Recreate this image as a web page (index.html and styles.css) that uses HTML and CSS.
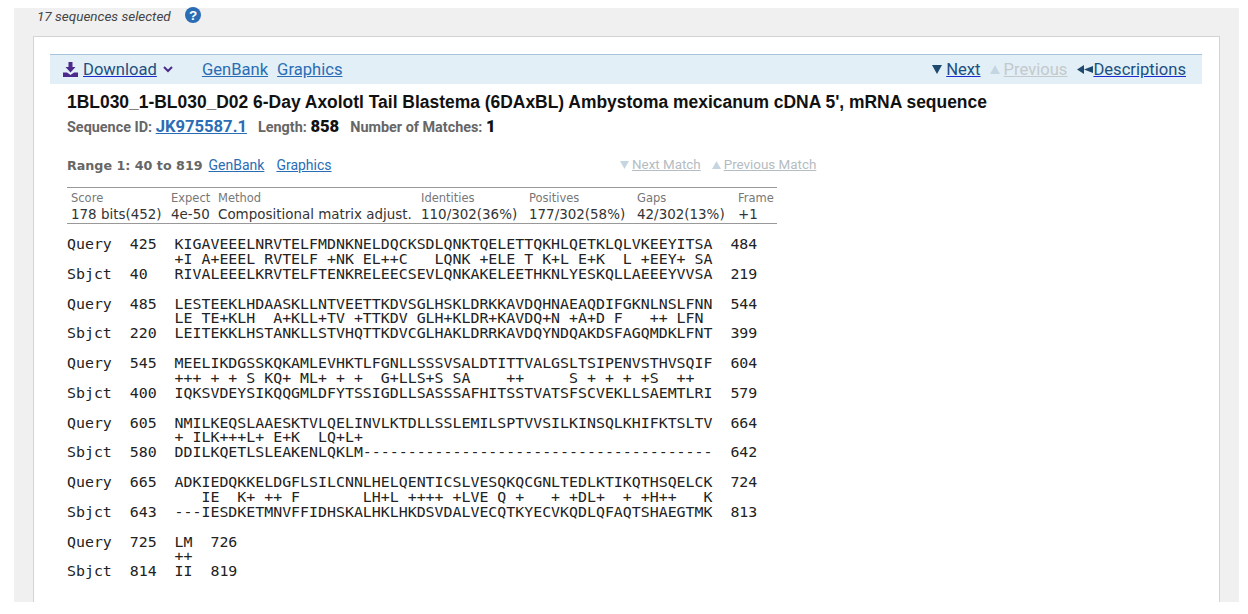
FILE: index.html
```html
<!DOCTYPE html>

<html>
<head>
    <meta charset="utf-8">
    <title>Alignments</title>
    <link rel="stylesheet" href="styles.css">
</head>

<body>
<div id="results">
    <div id="selected">
        <em>17 sequences selected</em>
        <svg class="help" width="16" height="16" viewBox="0 0 16 16"><circle cx="8" cy="8" r="8" fill="#2a6db5"/><text x="8" y="12.800" text-anchor="middle" class="help-mark">?</text></svg>
    </div>
    <div id="card">
        <div id="toolbar">
            <div class="tools">
                <svg class="dl" width="15" height="15" viewBox="0 0 15 15"><path d="M5.500 0h4v5h3L7.500 10.500 2.500 5h3z" fill="#4b2a8c"/><path d="M0 10.500h4l3.500 2.500 3.500-2.500h4V15H0z" fill="#4b2a8c"/></svg>
                <a href="#" class="dark">Download</a>
                <svg class="chev" width="10" height="7" viewBox="0 0 10 7"><path d="M1 1l4 4 4-4" fill="none" stroke="#4b2a8c" stroke-width="2"/></svg>
                <a href="#" class="first">GenBank</a>
                <a href="#">Graphics</a>
            </div>
            <div class="tools">
                <svg class="tri" width="10" height="9" viewBox="0 0 10 9"><path d="M0 0h10L5 9z" fill="#1d4a6e"/></svg><a href="#" class="dark">Next</a>
                <svg class="tri tri-off" width="10" height="9" viewBox="0 0 10 9"><path d="M0 9h10L5 0z" fill="#c5d6e2"/></svg><a href="#" class="off">Previous</a>
                <svg class="back" width="16" height="9" viewBox="0 0 16 9"><path d="M0 4.500L7 0v9zM7 4.500L16 1v7z" fill="#1d4a6e"/></svg><a href="#" class="dark">Descriptions</a>
            </div>
        </div>
        <h1>1BL030_1-BL030_D02 6-Day Axolotl Tail Blastema (6DAxBL) Ambystoma mexicanum cDNA 5', mRNA sequence</h1>
        <div id="seqinfo">
            <span>Sequence ID: <a href="#">JK975587.1</a></span>
            <span>Length: <b>858</b></span>
            <span>Number of Matches: <b>1</b></span>
        </div>
        <div id="range">
            <div class="range-left">
                <b>Range 1: 40 to 819</b>
                <a href="#">GenBank</a>
                <a href="#">Graphics</a>
            </div>
            <div class="range-right">
                <svg width="9" height="8" viewBox="0 0 9 8"><path d="M0 0h9L4.500 8z" fill="#c5d6e2"/></svg>
                <a href="#">Next Match</a>
                <svg class="gap" width="9" height="8" viewBox="0 0 9 8"><path d="M0 8h9L4.500 0z" fill="#c5d6e2"/></svg>
                <a href="#">Previous Match</a>
            </div>
        </div>
        <table id="stats">
            <tr class="head">
                <td class="c1">Score</td>
                <td class="c2">Expect</td>
                <td class="c3">Method</td>
                <td class="c4">Identities</td>
                <td class="c5">Positives</td>
                <td class="c6">Gaps</td>
                <td class="c7">Frame</td>
            </tr>
            <tr>
                <td class="c1">178 bits(452)</td>
                <td>4e-50</td>
                <td>Compositional matrix adjust.</td>
                <td>110/302(36%)</td>
                <td>177/302(58%)</td>
                <td>42/302(13%)</td>
                <td>+1</td>
            </tr>
        </table>
<pre id="align">Query  425  KIGAVEEELNRVTELFMDNKNELDQCKSDLQNKTQELETTQKHLQETKLQLVKEEYITSA  484
            +I A+EEEL RVTELF +NK EL++C   LQNK +ELE T K+L E+K  L +EEY+ SA
Sbjct  40   RIVALEEELKRVTELFTENKRELEECSEVLQNKAKELEETHKNLYESKQLLAEEEYVVSA  219

Query  485  LESTEEKLHDAASKLLNTVEETTKDVSGLHSKLDRKKAVDQHNAEAQDIFGKNLNSLFNN  544
            LE TE+KLH  A+KLL+TV +TTKDV GLH+KLDR+KAVDQ+N +A+D F   ++ LFN 
Sbjct  220  LEITEKKLHSTANKLLSTVHQTTKDVCGLHAKLDRRKAVDQYNDQAKDSFAGQMDKLFNT  399

Query  545  MEELIKDGSSKQKAMLEVHKTLFGNLLSSSVSALDTITTVALGSLTSIPENVSTHVSQIF  604
            +++ + + S KQ+ ML+ + +  G+LLS+S SA    ++     S + + + +S  ++
Sbjct  400  IQKSVDEYSIKQQGMLDFYTSSIGDLLSASSSAFHITSSTVATSFSCVEKLLSAEMTLRI  579

Query  605  NMILKEQSLAAESKTVLQELINVLKTDLLSSLEMILSPTVVSILKINSQLKHIFKTSLTV  664
            + ILK+++L+ E+K  LQ+L+
Sbjct  580  DDILKQETLSLEAKENLQKLM---------------------------------------  642

Query  665  ADKIEDQKKELDGFLSILCNNLHELQENTICSLVESQKQCGNLTEDLKTIKQTHSQELCK  724
               IE  K+ ++ F       LH+L ++++ +LVE Q +   + +DL+  + +H++   K
Sbjct  643  ---IESDKETMNVFFIDHSKALHKLHKDSVDALVECQTKYECVKQDLQFAQTSHAEGTMK  813

Query  725  LM  726
            ++
Sbjct  814  II  819</pre>
    </div>
</div>
</body>
</html>
```

FILE: styles.css
```css
html, body {
    margin: 0;
    padding: 0;
    height: 100%;
    overflow: hidden;
}

body {
    background-color: white;
    font-family: Roboto, "Liberation Sans", sans-serif;
    padding: 8px 9px 0 14px;
    box-sizing: border-box;
}

#results {
    background-color: #f0f0f0;
    height: 594px;
    padding: 0 19px;
}

#selected {
    height: 28px;
    font-size: 13.500px;
    color: #444;
    padding-left: 4px;
    display: flex;
    align-items: flex-start;
}

#selected em {
    line-height: 16px;
}

.help {
    margin-left: 14px;
    margin-top: -1px;
    overflow: visible;
}

.help-mark {
    font-family: "Liberation Sans", sans-serif;
    font-size: 13.500px;
    font-weight: bold;
    fill: white;
}

#card {
    background-color: white;
    border: 1px solid #d4d4d4;
    border-bottom: 0;
    box-sizing: border-box;
    height: 566px;
    padding: 17px 17px 0 16px;
}

#toolbar {
    display: flex;
    justify-content: space-between;
    align-items: center;
    height: 29px;
    background-color: #e2eff6;
    border-top: 1px solid #a9c3dc;
    padding: 0 16px 0 13px;
    font-size: 16.600px;
}

#toolbar a {
    color: #2a6db5;
}

#toolbar a.dark {
    color: #1d4f82;
    text-decoration-color: #1a2bd0;
}

#toolbar a.off {
    color: #c4c9cc;
}

.tools {
    display: flex;
    align-items: center;
}

.dl {
    margin-right: 5px;
}

.chev {
    margin-left: 6px;
}

.tools a.first {
    margin-left: 29px;
    margin-right: 9px;
}

.tri {
    margin-right: 4px;
}

.tri-off {
    margin-left: 9px;
}

.back {
    margin-left: 10px;
}

h1 {
    font-family: "Liberation Sans", sans-serif;
    font-size: 17.440px;
    font-weight: bold;
    margin: 8px 0 0 0;
    padding-left: 17px;
    line-height: 20px;
    color: #111;
}

#seqinfo {
    font-size: 14.400px;
    font-weight: bold;
    color: #666;
    padding-left: 17px;
    margin-top: 6px;
    height: 18px;
    line-height: 18px;
    display: flex;
    gap: 11px;
}

#seqinfo a {
    font-size: 16.600px;
    color: #2a6db5;
}

#seqinfo b {
    font-size: 16.600px;
    color: #111;
}

#range {
    display: flex;
    font-size: 12px;
    padding-left: 17px;
    margin-top: 21px;
    height: 16px;
    line-height: 16px;
}

#range b {
    font-family: "DejaVu Sans", sans-serif;
    font-size: 12.700px;
    color: #666;
    margin-right: 3px;
}

#range a {
    color: #2a6db5;
    font-size: 14px;
    margin-right: 9px;
}

.range-left {
    width: 553px;
}

.range-right a {
    margin-right: 0 !important;
    font-size: 13.400px !important;
    color: #b5bcc2 !important;
}

.gap {
    margin-left: 8px;
}

#stats {
    border-collapse: collapse;
    table-layout: fixed;
    width: 710px;
    margin: 14px 0 0 17px;
    border-top: 1px solid #999;
    border-bottom: 1px solid #999;
    font-family: "DejaVu Sans", sans-serif;
    font-size: 13.450px;
    color: #333;
}

#stats td {
    padding: 0;
    line-height: 17px;
    white-space: nowrap;
}

#stats .head td {
    color: #777;
    font-size: 11.500px;
    line-height: 16px;
    padding-top: 2px;
}

#stats td.c1 {
    width: 100px;
    padding-left: 4px;
}

.c2 { width: 47px; }
.c3 { width: 203px; }
.c4 { width: 108px; }
.c5 { width: 108px; }
.c6 { width: 101px; }

#align {
    font-family: "DejaVu Sans Mono", monospace;
    font-size: 14.900px;
    line-height: 14.870px;
    color: #222;
    margin: 13px 0 0 17px;
}
```
